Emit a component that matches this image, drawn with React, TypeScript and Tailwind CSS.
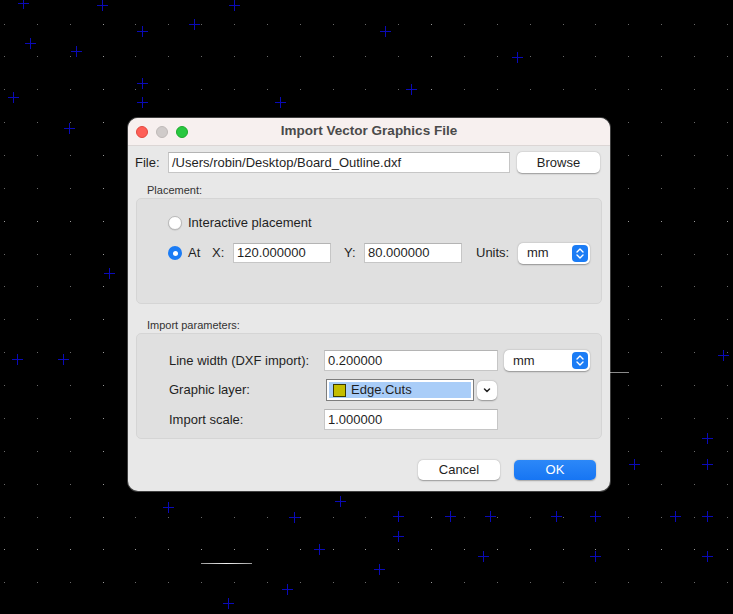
import React from 'react';

const crosses: [number, number][] = [
    [23, 3], [102, 5], [234, 5], [194, 24], [142, 31], [30, 43], [76, 51], [142, 83], [142, 102], [13, 97], [69, 128],
    [385, 31], [517, 57], [411, 89], [280, 102],
    [109, 273], [17, 359], [63, 359],
    [723, 355], [707, 438], [634, 464], [707, 464],
    [168, 507], [340, 501], [294, 517], [398, 516], [450, 516], [490, 516], [556, 516], [595, 516], [675, 516], [707, 516],
    [398, 536], [319, 549], [483, 556], [595, 556], [707, 556], [379, 569], [287, 589], [228, 603],
    [326, 620], [366, 620], [404, 620], [465, 620], [580, 620], [695, 620],
];

const Canvas: React.FC = () => {
    const cols = Array.from({ length: 23 }, (_, i) => i);
    const rows = Array.from({ length: 19 }, (_, j) => j);
    return (
        <svg className="absolute inset-0" width={733} height={614} shapeRendering="crispEdges">
            {rows.map((j) =>
                cols.map((i) => {
                    const major = i % 10 === 3 || j % 10 === 6;
                    return (
                        <rect
                            key={`${i}-${j}`}
                            x={Math.round(4 + 32.86 * i)}
                            y={Math.round(23.6 + 32.86 * j)}
                            width={1}
                            height={1}
                            fill={major ? '#9a9a9a' : '#6a6a6a'}
                        />
                    );
                })
            )}
            {crosses.map(([x, y], k) => (
                <g key={k} fill="#0a0ab8">
                    <rect x={x - 5} y={y} width={11} height={1} />
                    <rect x={x} y={y - 5} width={1} height={11} />
                </g>
            ))}
            <defs>
                <linearGradient id="seg" x1="0" x2="1">
                    <stop offset="0" stopColor="#9a9a9a" />
                    <stop offset="0.5" stopColor="#f2f2f2" />
                    <stop offset="1" stopColor="#9a9a9a" />
                </linearGradient>
            </defs>
            <rect x={201} y={563} width={51} height={1} fill="url(#seg)" />
            <rect x={600} y={372} width={29} height={1} fill="#8a8a8a" />
        </svg>
    );
};

const Stepper: React.FC = () => (
    <svg width={16} height={17} viewBox="0 0 16 17">
        <rect x={0} y={0} width={16} height={17} rx={4} fill="#1b7cf5" />
        <path d="M5 7 L8 4 L11 7" stroke="#fff" strokeWidth={1.4} fill="none" strokeLinecap="round" strokeLinejoin="round" />
        <path d="M5 10 L8 13 L11 10" stroke="#fff" strokeWidth={1.4} fill="none" strokeLinecap="round" strokeLinejoin="round" />
    </svg>
);

const TextField: React.FC<{ value: string; w: string }> = ({ value, w }) => (
    <div className={`${w} h-[21px] bg-white border border-[#c6c6c6] border-t-[#b4b4b4] flex items-center pl-[3px] text-[13px] text-[#1f1f1f] leading-none`}>
        {value}
    </div>
);

const Select: React.FC<{ value: string; w: string }> = ({ value, w }) => (
    <div className={`${w} h-[21px] bg-white rounded-[5px] shadow-[0_0.5px_1.5px_rgba(0,0,0,0.35)] flex items-center justify-between pl-[9px] pr-[2px] text-[13px] text-[#1f1f1f]`}>
        <span>{value}</span>
        <Stepper />
    </div>
);

const App: React.FC = () => {
    return (
        <div className="relative w-[733px] h-[614px] overflow-hidden bg-black" style={{ fontFamily: '"Liberation Sans", Arial, sans-serif' }}>
            <Canvas />

            <div className="absolute left-[128px] top-[118px] w-[482px] h-[373px] rounded-[10px] overflow-hidden bg-[#e8e8e8] shadow-[0_0_0_1px_rgba(255,255,255,0.25)] flex flex-col">
                {/* title bar */}
                <div className="relative h-[28px] bg-[#f7f0ef] flex items-center justify-center border-b border-[#dcd6d5]">
                    <div className="absolute left-[8px] top-[8px] flex gap-[8px]">
                        <span className="w-[12px] h-[12px] rounded-full bg-[#fe5f57] border border-[#e1483f]" />
                        <span className="w-[12px] h-[12px] rounded-full bg-[#d0cbca] border border-[#bfb9b8]" />
                        <span className="w-[12px] h-[12px] rounded-full bg-[#28c840] border border-[#1daa2c]" />
                    </div>
                    <span className="text-[13.5px] font-bold text-[#4a4a4a]">Import Vector Graphics File</span>
                </div>

                {/* file row */}
                <div className="mt-[6px] flex items-center pl-[7px] text-[13px] text-[#1f1f1f]">
                    <span className="w-[33px]">File:</span>
                    <TextField value="/Users/robin/Desktop/Board_Outline.dxf" w="w-[342px]" />
                    <button className="ml-[7px] w-[83px] h-[21px] bg-white rounded-[5px] shadow-[0_0.5px_1.5px_rgba(0,0,0,0.35)] text-[13px] text-[#1f1f1f]">
                        Browse
                    </button>
                </div>

                {/* placement */}
                <div className="h-[25px] pt-[11px] pl-[19px] text-[11px] leading-[13px] text-[#333]">Placement:</div>
                <div className="mx-[8px] h-[106px] rounded-[5px] bg-[#e0e0e0] border border-[#d5d5d5] pt-[14px] pl-[31px] text-[13px] text-[#1f1f1f]">
                    <div className="h-[20px] flex items-center">
                        <span className="w-[14px] h-[14px] rounded-full bg-white border border-[#b9b9b9] shadow-[0_0.5px_1px_rgba(0,0,0,0.15)]" />
                        <span className="ml-[6px]">Interactive placement</span>
                    </div>
                    <div className="mt-[10px] h-[20px] flex items-center">
                        <span className="w-[14px] h-[14px] rounded-full bg-[#1b7cf5] flex items-center justify-center">
                            <span className="w-[5px] h-[5px] rounded-full bg-white" />
                        </span>
                        <span className="ml-[6px] w-[24px]">At</span>
                        <span className="w-[21px]">X:</span>
                        <div className="w-[98px] h-[20px] bg-white border border-[#c6c6c6] border-t-[#b4b4b4] flex items-center pl-[3px]">120.000000</div>
                        <span className="ml-[13px] w-[20px]">Y:</span>
                        <div className="w-[98px] h-[20px] bg-white border border-[#c6c6c6] border-t-[#b4b4b4] flex items-center pl-[3px]">80.000000</div>
                        <span className="ml-[14px] w-[42px]">Units:</span>
                        <Select value="mm" w="w-[72px]" />
                    </div>
                </div>

                {/* import parameters */}
                <div className="h-[29px] pt-[15px] pl-[19px] text-[11px] leading-[13px] text-[#333]">Import parameters:</div>
                <div className="mx-[8px] h-[106px] rounded-[5px] bg-[#e0e0e0] border border-[#d5d5d5] pt-[16px] pl-[32px] text-[13px] text-[#1f1f1f]">
                    <div className="flex items-center">
                        <span className="w-[155px]">Line width (DXF import):</span>
                        <TextField value="0.200000" w="w-[174px]" />
                        <div className="ml-[6px]">
                            <Select value="mm" w="w-[86px]" />
                        </div>
                    </div>
                    <div className="mt-[8px] flex items-center">
                        <span className="w-[157px]">Graphic layer:</span>
                        <div className="w-[148px] h-[22px] bg-white border border-[#7d7d7d] p-[2px]">
                            <div className="h-full bg-[#a9cdf8] flex items-center pl-[4px]">
                                <span className="w-[13px] h-[13px] bg-[#c4bd00] border border-[#3a3a00]" />
                                <span className="ml-[5px]">Edge.Cuts</span>
                            </div>
                        </div>
                        <div className="ml-[3px] w-[20px] h-[19px] bg-white rounded-[5px] shadow-[0_0.5px_1.5px_rgba(0,0,0,0.35)] flex items-center justify-center">
                            <svg width={10} height={7} viewBox="0 0 10 7">
                                <path d="M2.5 2 L5 4.5 L7.5 2" stroke="#222" strokeWidth={1.5} fill="none" strokeLinecap="round" strokeLinejoin="round" />
                            </svg>
                        </div>
                    </div>
                    <div className="mt-[8px] flex items-center">
                        <span className="w-[155px]">Import scale:</span>
                        <TextField value="1.000000" w="w-[174px]" />
                    </div>
                </div>

                {/* buttons */}
                <div className="mt-[21px] flex justify-end gap-[14px] pr-[14px] text-[13px]">
                    <button className="w-[82px] h-[20px] bg-white rounded-[5px] shadow-[0_0.5px_1.5px_rgba(0,0,0,0.35)] text-[#1f1f1f]">Cancel</button>
                    <button className="w-[82px] h-[20px] rounded-[5px] bg-gradient-to-b from-[#2c88f8] to-[#1675f3] text-white shadow-[0_0.5px_1.5px_rgba(0,0,0,0.3)]">OK</button>
                </div>
            </div>
        </div>
    );
};

export default App;
